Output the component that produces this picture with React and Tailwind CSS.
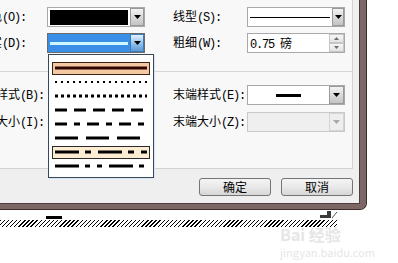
import React from "react";

function Label({ text }) {
  const i = text.indexOf("(");
  return (
    <span className="whitespace-nowrap">
      <span>{text.slice(0, i)}</span>
      <span className="font-['Liberation_Mono',monospace] tracking-[-1.2px]">{text.slice(i)}</span>
    </span>
  );
}

function Tri({ color = "#000" }) {
  return (
    <svg width="7" height="4" viewBox="0 0 7 4">
      <path d="M0 0 H7 L3.5 4 Z" fill={color} />
    </svg>
  );
}

function DropBtn({ selected, disabled }) {
  const cls = selected
    ? "border-[#3d7bb5] bg-[linear-gradient(#e3f1fd,#8fc0ec_55%,#5d9ad6)]"
    : disabled
    ? "border-[#d4d4d4] bg-[#eeeeee]"
    : "border-[#9a9a9a] bg-[linear-gradient(#f3f3f3,#dadada_50%,#c4c4c4)]";
  return (
    <div className={"w-[15px] h-[18px] border flex items-center justify-center " + cls}>
      <Tri color={disabled ? "#a8a8a8" : "#000"} />
    </div>
  );
}

function Combo({ children, selected, disabled }) {
  const cls = selected
    ? "border-[#6c6c6c] bg-[#3a8ee6]"
    : disabled
    ? "border-[#c9c9c9] bg-[#efefef]"
    : "border-[#a9a9a9] bg-white";
  return (
    <div className={"w-[98px] h-[20px] border flex items-center " + cls}>
      <div className="flex-1 h-full flex items-center px-[2px]">{children}</div>
      <DropBtn selected={selected} disabled={disabled} />
    </div>
  );
}

function Pattern({ dash, w = 3, color = "#000" }) {
  return (
    <svg width="92" height="4" viewBox="0 0 92 4" className="block">
      <line x1="0" y1="2" x2="92" y2="2" stroke={color} strokeWidth={w} strokeDasharray={dash} />
    </svg>
  );
}

function Item({ children, hl }) {
  const cls =
    hl === "a"
      ? "border border-[#3a2418] bg-[#f4c9a1]"
      : hl === "b"
      ? "border border-[#2a2a2a] bg-[#fbecd2]"
      : "border border-transparent";
  return (
    <div className="h-[14px] flex items-center">
      <div className={"w-[98px] h-[13px] flex items-center justify-center " + cls}>{children}</div>
    </div>
  );
}

export default function App() {
  return (
    <div className="w-[398px] h-[263px] relative overflow-hidden bg-white font-['Noto_Sans_CJK_SC',sans-serif] text-[12px] leading-none text-black">
      {/* dialog frame */}
      <div className="w-[367px] h-[210px] border-r border-b border-[#3b2c2c] rounded-br-[7px] bg-[#8a7474]">
        <div className="w-[366px] h-[209px] border-r-[6px] border-b-[5px] border-[#7c6666] rounded-br-[6px]">
          <div className="w-[360px] h-[204px] border-r border-b border-[#4e3d3d] bg-[#efefef] flex flex-col">
            {/* panel */}
            <div className="w-[353px] h-[169px] border-r border-b border-[#d2d2d2] bg-[#f8f8f8] flex flex-col pt-[7px]">
              <div className="flex items-center h-[20px]">
                <div className="w-[26px] overflow-hidden flex justify-end">
                  <Label text="颜色(O):" />
                </div>
                <div className="ml-[21px]">
                  <Combo>
                    <div className="w-[78px] h-[15px] bg-black" />
                  </Combo>
                </div>
                <div className="ml-[28px] w-[74px]">
                  <Label text="线型(S):" />
                </div>
                <Combo>
                  <div className="w-[80px] h-px bg-black" />
                </Combo>
              </div>
              <div className="flex items-center h-[20px] mt-[6px]">
                <div className="w-[26px] overflow-hidden flex justify-end">
                  <Label text="虚实(D):" />
                </div>
                <div className="ml-[21px]">
                  <Combo selected>
                    <div className="w-[78px] h-[3px] bg-[#cdf6ff]" />
                  </Combo>
                </div>
                <div className="ml-[28px] w-[74px]">
                  <Label text="粗细(W):" />
                </div>
                <div className="w-[98px] h-[20px] border border-[#a9a9a9] bg-white flex items-center">
                  <div className="flex-1 pl-[2px] pt-px whitespace-nowrap">
                    <span className="font-['Liberation_Mono',monospace] tracking-[-1.2px]">0.75 </span>磅
                  </div>
                  <div className="w-[15px] h-[18px] flex flex-col">
                    <div className="h-[9px] border border-[#c6c6c6] bg-[linear-gradient(#f7f7f7,#e2e2e2)] flex items-center justify-center">
                      <svg width="5" height="3" viewBox="0 0 5 3"><path d="M0 3 H5 L2.5 0 Z" fill="#6a6a6a" /></svg>
                    </div>
                    <div className="h-[9px] border border-[#c6c6c6] bg-[linear-gradient(#f7f7f7,#e2e2e2)] flex items-center justify-center">
                      <svg width="5" height="3" viewBox="0 0 5 3"><path d="M0 0 H5 L2.5 3 Z" fill="#6a6a6a" /></svg>
                    </div>
                  </div>
                </div>
              </div>
              <div className="mt-[18px] h-px bg-[#d6d6d6] w-[352px]" />
              <div className="flex items-center h-[20px] mt-[13px]">
                <div className="w-[44px] overflow-hidden flex justify-end">
                  <Label text="始端样式(B):" />
                </div>
                <div className="ml-[129px] w-[74px]">
                  <Label text="末端样式(E):" />
                </div>
                <Combo>
                  <div className="flex-1 flex justify-center">
                    <div className="w-[25px] h-[3px] bg-black" />
                  </div>
                </Combo>
              </div>
              <div className="flex items-center h-[20px] mt-[7px]">
                <div className="w-[44px] overflow-hidden flex justify-end">
                  <Label text="始端大小(I):" />
                </div>
                <div className="ml-[129px] w-[74px]">
                  <Label text="末端大小(Z):" />
                </div>
                <Combo disabled />
              </div>
            </div>
            {/* buttons */}
            <div className="flex justify-end gap-[10px] pr-[6px] mt-[9px]">
              <div className="w-[72px] h-[18px] rounded-[3px] border border-[#747474] bg-[linear-gradient(#f4f4f4,#e9e9e9_50%,#d6d6d6)] flex items-center justify-center">确定</div>
              <div className="w-[72px] h-[18px] rounded-[3px] border border-[#747474] bg-[linear-gradient(#f4f4f4,#e9e9e9_50%,#d6d6d6)] flex items-center justify-center">取消</div>
            </div>
          </div>
        </div>
      </div>

      {/* below dialog */}
      <div className="ml-[46px] mt-[6px] w-[16px] h-[3px] bg-black" />
      <div className="mt-px w-[337px] h-[7px] bg-[repeating-linear-gradient(135deg,#000_0px,#000_1px,transparent_1px,transparent_2.9px)]" />

      {/* resize grip */}
      <svg className="absolute left-[316px] top-[206px]" width="22" height="16" viewBox="0 0 22 16">
        <path d="M4 9 H11 V5 H15 V12 H4 Z" fill="#3a3a3a" />
        <path d="M16 12 L21 6" stroke="#555" strokeWidth="1" />
      </svg>

      {/* dropdown list */}
      <div className="absolute left-[48px] top-[54px] w-[106px] h-[124px] border border-[#39475a] bg-white shadow-[1px_1px_0_#d6e4f2] flex flex-col pl-[3px] pt-[6px]">
        <Item hl="a">
          <Pattern dash="" color="#2e0707" />
        </Item>
        <Item>
          <Pattern dash="2 4" w={2} />
        </Item>
        <Item>
          <Pattern dash="3 3" />
        </Item>
        <Item>
          <Pattern dash="12 7" />
        </Item>
        <Item>
          <Pattern dash="12 7 6 7" />
        </Item>
        <Item>
          <Pattern dash="23 8" />
        </Item>
        <Item hl="b">
          <Pattern dash="24 6 6 7" />
        </Item>
        <Item>
          <Pattern dash="24 6 5 7 5 7" />
        </Item>
      </div>

      {/* watermark */}
      <div className="absolute left-[280px] top-[226px] flex flex-col items-start text-[#e6e6e6]">
        <div className="text-[16px] font-bold leading-none whitespace-nowrap">Bai 经验</div>
        <div className="text-[11px] leading-none mt-[5px] whitespace-nowrap">jingyan.baidu.com</div>
      </div>
    </div>
  );
}
